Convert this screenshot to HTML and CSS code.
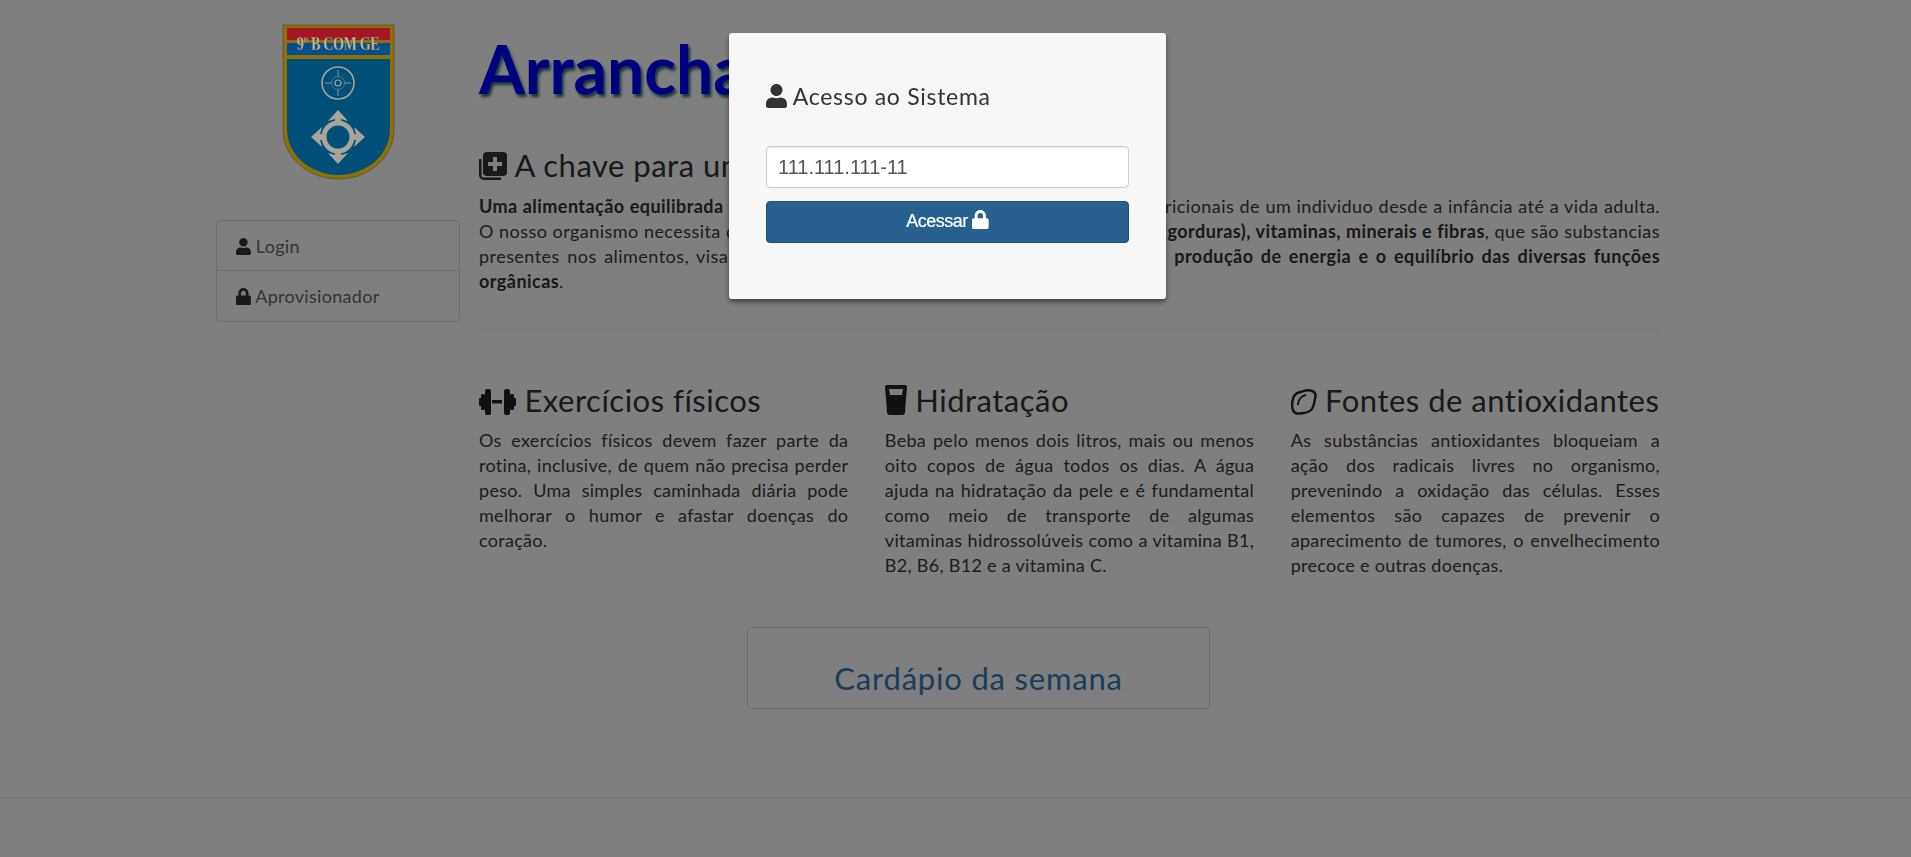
FILE: index.html
```html
<!DOCTYPE html>
<html lang="pt-BR">
<head>
  <meta charset="UTF-8">
  <title>Arranchamento</title>
  <link rel="stylesheet" href="styles.css">
</head>
<body>
  <div class="wrap">
    <div class="sidebar">
      <svg class="logo" viewBox="0 0 113 156">
        <path d="M1 1H112V105C112 135 85 155 56.5 155C28 155 1 135 1 105Z" fill="#8f7000" stroke="#444" stroke-width="0.6"/>
        <path d="M5 4H108V105C108 132 83 151 56.5 151C30 151 5 132 5 105Z" fill="#004f78"/>
        <rect x="5" y="4" width="103" height="12" fill="#a81525"/>
        <rect x="5" y="16" width="103" height="3" fill="#8f7000"/>
        <rect x="5" y="19" width="103" height="12" fill="#005090"/>
        <rect x="5" y="31" width="103" height="4" fill="#8f7000"/>
        <text class="logo-text" transform="translate(56 26) scale(1 1.4)">9º B COM GE</text>
        <g fill="none" stroke="#a8a49a">
          <circle cx="56" cy="59" r="16" stroke-width="1.600"/>
          <circle cx="56" cy="59" r="3" stroke-width="1.200"/>
          <circle cx="56" cy="59" r="6.500" stroke-width="0.500"/>
          <path d="M56 46V52M56 66V72M43 59H49M63 59H69" stroke-width="0.800"/>
          <circle cx="56" cy="113" r="14" stroke-width="5"/>
        </g>
        <path fill="#a8a49a" d="M56 86L66 97L59 95V100H53V95L46 97ZM56 140L66 129L59 131V126H53V131L46 129ZM29 113L40 103L38 110H43V116H38L40 123ZM83 113L72 103L74 110H69V116H74L72 123Z"/>
      </svg>
      <ul class="side-menu">
        <li>
          <svg class="ico" viewBox="0 0 448 512"><path d="M224 256c70.7 0 128-57.3 128-128S294.7 0 224 0 96 57.3 96 128s57.3 128 128 128zm89.6 32h-16.7c-22.2 10.2-46.9 16-72.9 16s-50.6-5.8-72.9-16h-16.7C60.2 288 0 348.2 0 422.4V464c0 26.5 21.5 48 48 48h352c26.5 0 48-21.5 48-48v-41.6c0-74.2-60.2-134.4-134.4-134.4z"/></svg>
          Login
        </li>
        <li>
          <svg class="ico" viewBox="0 0 448 512"><path d="M400 224h-24v-72C376 68.2 307.8 0 224 0S72 68.2 72 152v72H48c-26.5 0-48 21.5-48 48v192c0 26.5 21.5 48 48 48h352c26.5 0 48-21.5 48-48V272c0-26.5-21.5-48-48-48zm-104 0H152v-72c0-39.7 32.3-72 72-72s72 32.3 72 72v72z"/></svg>
          Aprovisionador
        </li>
      </ul>
    </div>

    <div class="main">
      <h1>Arranchamento</h1>

      <h2>
        <svg class="ico" viewBox="0 0 28 28"><path d="M8 0h16a4 4 0 0 1 4 4v16a4 4 0 0 1-4 4H8a4 4 0 0 1-4-4V4a4 4 0 0 1 4-4zm6 5v5H9v4h5v5h4v-5h5v-4h-5V5z" fill-rule="evenodd"/><path d="M0 7h2.500v16A2.500 2.500 0 0 0 5 25.500h17V28H5a5 5 0 0 1-5-5z"/></svg>
        A chave para uma alimentação saudável
      </h2>
      <p class="intro">
        <span class="ln"><strong>Uma alimentação equilibrada</strong> é fundamental para suprir todas as necessidades nutricionais de um individuo desde a infância até a vida adulta.</span>
        <span class="ln">O nosso organismo necessita de nutrientes como <strong>proteínas, carboidratos, lipídios (gorduras), vitaminas, minerais e fibras</strong>, que são substancias</span>
        <span class="ln">presentes nos alimentos, visando a manutenção do corpo, <strong>reparação de tecidos, produção de energia e o equilíbrio das diversas funções</strong></span>
        <span><strong>orgânicas</strong>.</span>
      </p>
      <hr class="rule">

      <div class="cols">
        <div class="col">
          <h3>
            <svg class="ico dumbbell" viewBox="0 0 37 26"><rect x="0" y="9" width="3" height="8" rx="1"/><rect x="2" y="5" width="4" height="16" rx="1.500"/><rect x="6" y="0" width="6" height="26" rx="2"/><rect x="13" y="11" width="10" height="3.500"/><rect x="25" y="0" width="6" height="26" rx="2"/><rect x="31" y="5" width="4" height="16" rx="1.500"/><rect x="34" y="9" width="3" height="8" rx="1"/></svg>
            Exercícios físicos
          </h3>
          <p class="txt">
            <span class="ln">Os exercícios físicos devem fazer parte da</span>
            <span class="ln">rotina, inclusive, de quem não precisa perder</span>
            <span class="ln">peso. Uma simples caminhada diária pode</span>
            <span class="ln">melhorar o humor e afastar doenças do</span>
            <span>coração.</span>
          </p>
        </div>
        <div class="col">
          <h3>
            <svg class="ico glass" viewBox="0 0 22 30"><path fill-rule="evenodd" d="M2 0H20a2 2 0 0 1 2 2L20 27a3 3 0 0 1-3 3H5a3 3 0 0 1-3-3L0 2A2 2 0 0 1 2 0ZM4 4L5 10H17L18 4Z"/></svg>
            Hidratação
          </h3>
          <p class="txt">
            <span class="ln">Beba pelo menos dois litros, mais ou menos</span>
            <span class="ln">oito copos de água todos os dias. A água</span>
            <span class="ln">ajuda na hidratação da pele e é fundamental</span>
            <span class="ln">como meio de transporte de algumas</span>
            <span class="ln">vitaminas hidrossolúveis como a vitamina B1,</span>
            <span>B2, B6, B12 e a vitamina C.</span>
          </p>
        </div>
        <div class="col">
          <h3>
            <svg class="ico lemon" viewBox="0 0 26 26"><path fill="none" stroke="#222" stroke-width="2.400" d="M21 2C17 0 13 2 9 3C5 4 2 7 1.500 12C1 15 0.500 18 2 21C3 24 6 25 9 24.500C13 24 17 24 20 21C23 18 23 14 24 10C25 6 25 3 21 2Z"/><path fill="none" stroke="#222" stroke-width="2" d="M7 16C7 11 10 7 15 6"/></svg>
            Fontes de antioxidantes
          </h3>
          <p class="txt">
            <span class="ln">As substâncias antioxidantes bloqueiam a</span>
            <span class="ln">ação dos radicais livres no organismo,</span>
            <span class="ln">prevenindo a oxidação das células. Esses</span>
            <span class="ln">elementos são capazes de prevenir o</span>
            <span class="ln">aparecimento de tumores, o envelhecimento</span>
            <span>precoce e outras doenças.</span>
          </p>
        </div>
      </div>

      <a class="menu-box" href="#">Cardápio da semana</a>
    </div>
  </div>

  <hr class="foot-rule">

  <div class="overlay">
    <div class="modal">
      <h4>
        <svg class="ico" viewBox="0 0 448 512"><path d="M224 256c70.7 0 128-57.3 128-128S294.7 0 224 0 96 57.3 96 128s57.3 128 128 128zm89.6 32h-16.7c-22.2 10.2-46.9 16-72.9 16s-50.6-5.8-72.9-16h-16.7C60.2 288 0 348.2 0 422.4V464c0 26.5 21.5 48 48 48h352c26.5 0 48-21.5 48-48v-41.6c0-74.2-60.2-134.4-134.4-134.4z"/></svg>
        Acesso ao Sistema
      </h4>
      <input class="cpf" type="text" value="111.111.111-11">
      <button class="btn-go">Acessar
        <svg class="ico" viewBox="0 0 448 512"><path d="M400 224h-24v-72C376 68.2 307.8 0 224 0S72 68.2 72 152v72H48c-26.5 0-48 21.5-48 48v192c0 26.5 21.5 48 48 48h352c26.5 0 48-21.5 48-48V272c0-26.5-21.5-48-48-48zm-104 0H152v-72c0-39.7 32.3-72 72-72s72 32.3 72 72v72z"/></svg>
      </button>
    </div>
  </div>
</body>
</html>
```

FILE: styles.css
```css
html, body {
  margin: 0;
  padding: 0;
  height: 857px;
  overflow: hidden;
}

body {
  font-family: "Lato", "Open Sans", sans-serif;
  font-size: 18px;
  letter-spacing: 0.3px;
  line-height: 25px;
  color: #3a3a3a;
  background: #fff;
}

.ico {
  display: inline-block;
  height: 1em;
  width: auto;
  fill: currentColor;
}

.wrap {
  width: 1444px;
  margin-left: 216px;
  display: grid;
  grid-template-columns: 244px 1181px;
  column-gap: 19px;
}

/* coluna esquerda */
.sidebar {
  padding-top: 24px;
  text-align: center;
}

/* o brasao fica acima do fundo escuro, como na imagem original */
.logo {
  display: block;
  position: relative;
  z-index: 2;
  width: 113px;
  height: 156px;
  margin: 0 auto 40px;
}

.logo-text {
  font-family: "Liberation Serif", serif;
  font-size: 14px;
  font-weight: bold;
  fill: #c9c1a2;
  stroke: #3a3a30;
  stroke-width: 0.25px;
  text-anchor: middle;
  letter-spacing: -0.3px;
}

.side-menu {
  list-style: none;
  margin: 0;
  padding: 0;
  border: 1px solid #ddd;
  border-radius: 4px;
  text-align: left;
}

.side-menu li {
  height: 49px;
  line-height: 50px;
  padding-left: 19px;
  font-size: 18px;
  color: #666;
}

.side-menu li + li {
  height: 50px;
  line-height: 51px;
  border-top: 1px solid #ddd;
}

.side-menu .ico {
  height: 17px;
  vertical-align: -2px;
  color: #333;
}

/* conteudo */
h1 {
  margin: 36px 0 0;
  font-size: 66px;
  line-height: 66px;
  font-weight: 700;
  letter-spacing: 0;
  color: #0000ff;
  text-shadow: 2px 3px 3px #2e7070;
}

h2 {
  margin: 45px 0 0;
  font-size: 31px;
  line-height: 36px;
  font-weight: 400;
  letter-spacing: 0.5px;
  color: #333;
}

h2 .ico {
  height: 28px;
  vertical-align: -3px;
}

.intro {
  margin: 11px 0 0;
  text-align: justify;
  letter-spacing: 0.45px;
}

.ln {
  display: block;
  text-align-last: justify;
}

strong {
  font-weight: 700;
  color: #333;
}

.rule {
  margin: 35px 0 0;
  border: 0;
  border-top: 1px solid #eee;
}

.cols {
  display: grid;
  grid-template-columns: repeat(3, 369.33px);
  column-gap: 36.5px;
  margin-top: 52px;
}

h3 {
  margin: 0;
  font-size: 31px;
  line-height: 36px;
  font-weight: 400;
  letter-spacing: 0.5px;
  color: #333;
  white-space: nowrap;
}

h3 .ico {
  vertical-align: -3px;
  color: #222;
}

.dumbbell {
  height: 26px;
  width: 37px;
}

.glass {
  height: 30px;
  width: 22px;
  vertical-align: -4px;
}

.lemon {
  height: 26px;
  width: 26px;
}

.txt {
  margin: 10px 0 0;
}

.menu-box {
  display: block;
  box-sizing: border-box;
  width: 463px;
  height: 82px;
  margin: 49px 0 0 268px;
  padding-top: 32px;
  border: 1px solid #ddd;
  border-radius: 4px;
  text-align: center;
  font-size: 31px;
  font-weight: 400;
  line-height: 36px;
  letter-spacing: 0.8px;
  color: #337ab7;
  text-decoration: none;
}

.foot-rule {
  margin: 0;
  margin-top: 88px;
  border: 0;
  border-top: 1px solid #eee;
}

/* modal */
.overlay {
  position: fixed;
  top: 0;
  right: 0;
  bottom: 0;
  left: 0;
  z-index: 1;
  background: rgba(0, 0, 0, 0.5);
}

.modal {
  box-sizing: border-box;
  width: 437px;
  height: 266px;
  margin: 33px 0 0 729px;
  padding: 49px 37px 0;
  background: #f7f7f7;
  border-radius: 3px;
  box-shadow: 0 3px 5px rgba(0, 0, 0, 0.5);
}

.modal h4 {
  margin: 0;
  font-size: 23px;
  line-height: 28px;
  font-weight: 400;
  letter-spacing: 0.7px;
  color: #333;
}

.modal h4 .ico {
  height: 24px;
  vertical-align: -3px;
}

.cpf {
  display: block;
  box-sizing: border-box;
  width: 100%;
  height: 42px;
  margin-top: 36px;
  padding: 0 11px;
  border: 1px solid #ccc;
  border-radius: 4px;
  background: #fff;
  font-family: "Liberation Sans", sans-serif;
  font-size: 20px;
  color: #555;
  box-shadow: inset 0 1px 1px rgba(0, 0, 0, 0.075);
}

.btn-go {
  display: block;
  width: 100%;
  height: 42px;
  margin-top: 13px;
  padding-bottom: 3px;
  border: 1px solid #204d74;
  border-radius: 4px;
  background: #286090;
  font-family: "Liberation Sans", sans-serif;
  font-size: 18px;
  font-weight: 400;
  letter-spacing: -0.5px;
  color: #fff;
  -webkit-text-stroke: 0.2px #fff;
}

.btn-go .ico {
  height: 19px;
  vertical-align: -2px;
}
```
